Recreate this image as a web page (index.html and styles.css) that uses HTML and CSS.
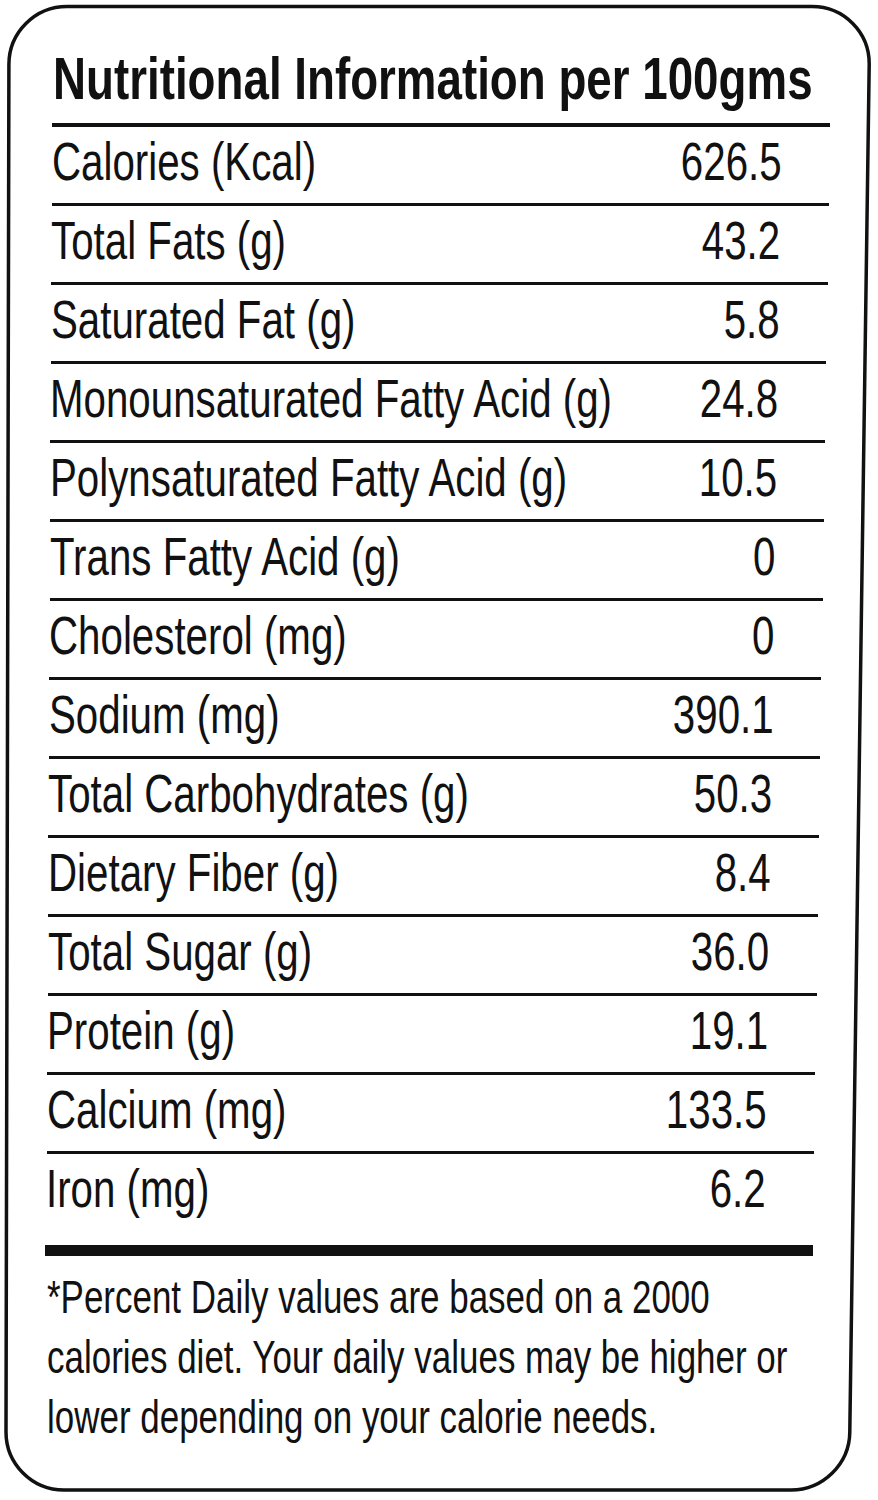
FILE: index.html
```html
<!DOCTYPE html>
<html lang="en">
<head>
<meta charset="utf-8">
<title>Nutritional Information</title>
<link rel="stylesheet" href="styles.css">
</head>
<body>
<div class="page">
  <svg class="frame" width="878" height="1500" viewBox="0 0 878 1500" aria-hidden="true">
    <path d="M67 6.5 H812 C844 6.5 869.6 32.5 869.2 64.5 L849.8 1432 C849.5 1464 823 1490 791 1490 H64 C32 1490 6 1464 6 1432 L8.9 64.5 C8.9 32.5 35 6.5 67 6.5 Z" fill="none" stroke="#111" stroke-width="3.5"/>
  </svg>
  <div class="card">
    <h1 class="title"><span class="title-text">Nutritional Information per 100gms</span></h1>
    <div class="rows">
      <div class="row"><span class="label">Calories (Kcal)</span><span class="value">626.5</span></div>
      <div class="row"><span class="label">Total Fats (g)</span><span class="value">43.2</span></div>
      <div class="row"><span class="label">Saturated Fat (g)</span><span class="value">5.8</span></div>
      <div class="row"><span class="label">Monounsaturated Fatty Acid (g)</span><span class="value">24.8</span></div>
      <div class="row"><span class="label">Polynsaturated Fatty Acid (g)</span><span class="value">10.5</span></div>
      <div class="row"><span class="label">Trans Fatty Acid (g)</span><span class="value">0</span></div>
      <div class="row"><span class="label">Cholesterol (mg)</span><span class="value">0</span></div>
      <div class="row"><span class="label">Sodium (mg)</span><span class="value">390.1</span></div>
      <div class="row"><span class="label">Total Carbohydrates (g)</span><span class="value">50.3</span></div>
      <div class="row"><span class="label">Dietary Fiber (g)</span><span class="value">8.4</span></div>
      <div class="row"><span class="label">Total Sugar (g)</span><span class="value">36.0</span></div>
      <div class="row"><span class="label">Protein (g)</span><span class="value">19.1</span></div>
      <div class="row"><span class="label">Calcium (mg)</span><span class="value">133.5</span></div>
      <div class="row row-last"><span class="label">Iron (mg)</span><span class="value">6.2</span></div>
    </div>
    <div class="thick-bar"></div>
    <p class="note">*Percent Daily values are based on a 2000<br>calories diet. Your daily values may be higher or<br>lower depending on your calorie needs.</p>
  </div>
</div>
</body>
</html>
```

FILE: styles.css
```css
html, body {
  margin: 0;
  padding: 0;
  background: #ffffff;
}

body {
  font-family: "Liberation Sans", Arial, sans-serif;
  color: #111111;
}

.page {
  position: relative;
  width: 878px;
  height: 1500px;
  overflow: hidden;
}

.frame {
  position: absolute;
  top: 0;
  left: 0;
}

.card {
  position: relative;
  padding: 49px 48px 0 52px;
}

.title {
  margin: 0;
  padding: 0 0 14px 1px;
  font-size: 60px;
  line-height: 60px;
  font-weight: 700;
  white-space: nowrap;
  border-bottom: 4px solid #111111;
}

.title-text {
  display: inline-block;
  transform: scaleX(0.762);
  transform-origin: left center;
}

.rows {
  display: flex;
  flex-direction: column;
}

.row {
  display: flex;
  align-items: flex-start;
  height: 76px;
  padding-right: 47px;
  border-bottom: 3px solid #111111;
  font-size: 53px;
  line-height: 69px;
  white-space: nowrap;
}

.row:nth-child(1)  { margin-right: 1.2px;  margin-left: -0.4px; }
.row:nth-child(2)  { margin-right: 2.5px;  margin-left: -0.8px; }
.row:nth-child(3)  { margin-right: 3.7px;  margin-left: -1.2px; }
.row:nth-child(4)  { margin-right: 4.9px;  margin-left: -1.6px; }
.row:nth-child(5)  { margin-right: 6.2px;  margin-left: -2px; }
.row:nth-child(6)  { margin-right: 7.4px;  margin-left: -2.4px; }
.row:nth-child(7)  { margin-right: 8.6px;  margin-left: -2.8px; }
.row:nth-child(8)  { margin-right: 9.8px;  margin-left: -3.2px; }
.row:nth-child(9)  { margin-right: 11.1px; margin-left: -3.6px; }
.row:nth-child(10) { margin-right: 12.3px; margin-left: -4px; }
.row:nth-child(11) { margin-right: 13.5px; margin-left: -4.4px; }
.row:nth-child(12) { margin-right: 14.8px; margin-left: -4.8px; }
.row:nth-child(13) { margin-right: 16px;   margin-left: -5.2px; }
.row:nth-child(14) { margin-right: 17.2px; margin-left: -5.6px; }

.row-last {
  border-bottom: none;
}

.label {
  flex: 0 1 auto;
  min-width: 0;
  transform: scaleX(0.76);
  transform-origin: left center;
}

.value {
  flex: 0 0 auto;
  margin-left: auto;
  transform: scaleX(0.76);
  transform-origin: right center;
}

.thick-bar {
  height: 11px;
  margin: 15px 17px 0 -7px;
  background: #111111;
}

.note {
  margin: 11px 0 0 -5px;
  font-size: 46px;
  line-height: 60px;
  white-space: nowrap;
  transform: scaleX(0.76);
  transform-origin: left top;
}
```
